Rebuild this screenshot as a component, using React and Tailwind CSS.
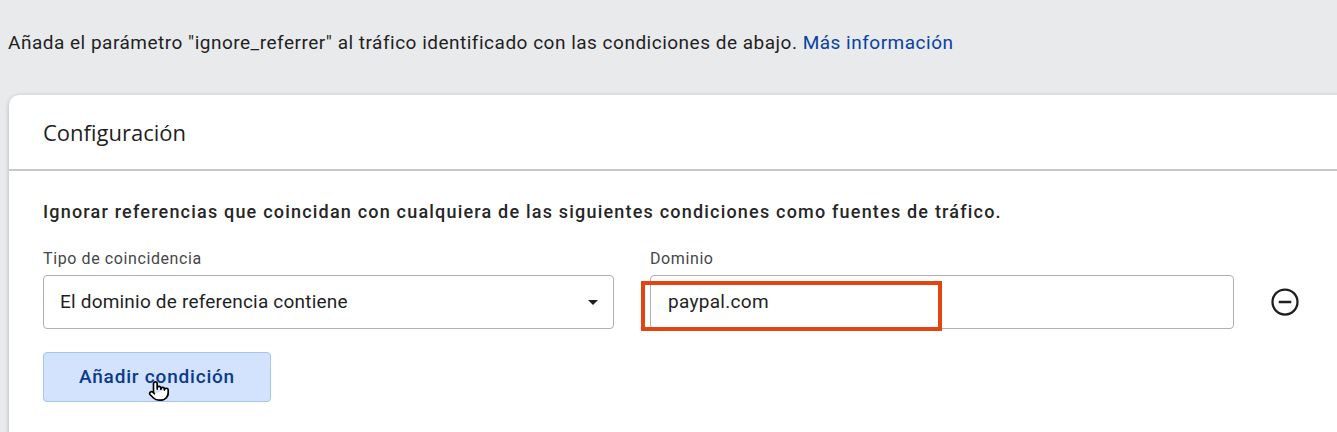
import React from "react";
import { Pointer } from "lucide-react";

export default function App() {
  return (
    <div className="w-[1337px] h-[432px] overflow-hidden bg-[#e9eaec] font-['Roboto',sans-serif] text-[#1f1f1f]">
      <p className="pl-[8px] pt-[31px] text-[19px] leading-[24px] tracking-[0.5px] whitespace-nowrap">
        Añada el parámetro "ignore_referrer" al tráfico identificado con las condiciones de abajo.{" "}
        <span className="text-[#0842a0]">Más información</span>
      </p>

      <div className="ml-[9px] mt-[40px] w-[1350px] h-[340px] bg-white rounded-tl-[10px] shadow-[0_1px_4px_rgba(0,0,0,0.25)]">
        <div className="h-[76px] flex items-center pl-[34px] border-b-2 border-[#c8c8c8]">
          <h2 className="font-['Open_Sans',sans-serif] text-[22px] text-[#1f1f1f]">Configuración</h2>
        </div>

        <div className="pl-[34px] pt-[29px]">
          <p className="text-[18px] leading-[24px] font-medium tracking-[1.2px] text-[#262626] whitespace-nowrap">
            Ignorar referencias que coincidan con cualquiera de las siguientes condiciones como fuentes de tráfico.
          </p>

          <div className="flex items-end mt-[25px]">
            <div className="w-[571px]">
              <label className="block text-[16px] leading-[20px] tracking-[0.6px] text-[#444746] mb-[6px]">Tipo de coincidencia</label>
              <div className="h-[54px] border border-[#b0b0b0] rounded-[4px] flex items-center justify-between pl-[16px] pr-[8px]">
                <span className="text-[19px] tracking-[0.2px]">El dominio de referencia contiene</span>
                <svg width="24" height="24" viewBox="0 0 24 24">
                  <path d="M7 10l5 5 5-5z" fill="#1f1f1f" />
                </svg>
              </div>
            </div>

            <div className="w-[584px] ml-[36px]">
              <label className="block text-[16px] leading-[20px] tracking-[0.6px] text-[#444746] mb-[6px]">Dominio</label>
              <div className="relative h-[54px] border border-[#b0b0b0] rounded-[4px] flex items-center pl-[17px]">
                <span className="text-[19px] tracking-[0.3px]">paypal.com</span>
                <div className="absolute left-[-10px] top-[5px] w-[301px] h-[50px] border-[4px] border-[#e2450f]" />
              </div>
            </div>

            <div className="h-[54px] flex items-center ml-[36px]">
              <svg width="30" height="30" viewBox="0 0 24 24" fill="none" stroke="#1f1f1f" strokeWidth="1.8">
                <circle cx="12" cy="12" r="10" />
                <path d="M7 12h10" strokeWidth="2" />
              </svg>
            </div>
          </div>

          <div className="relative mt-[23px] w-[228px] h-[50px] bg-[#d3e3fd] border border-[#a9c3ec] rounded-[4px] flex items-center justify-center">
            <span className="text-[19px] font-medium tracking-[0.8px] text-[#0b3a8c]">Añadir condición</span>
            <Pointer className="absolute left-[104px] top-[27px] w-[22px] h-[22px] text-black fill-white" strokeWidth={1.8} />
          </div>
        </div>
      </div>
    </div>
  );
}
